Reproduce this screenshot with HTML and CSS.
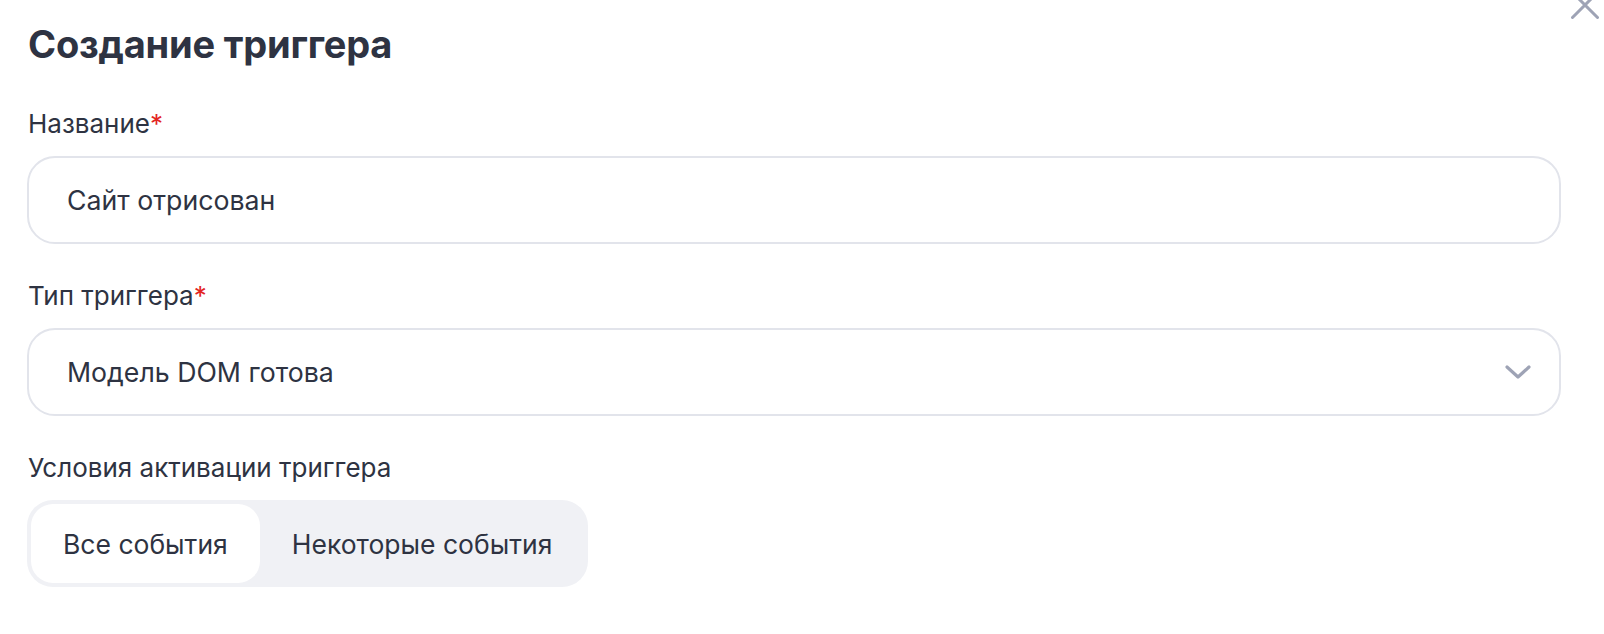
FILE: index.html
```html
<!DOCTYPE html>
<html lang="ru">
<head>
<meta charset="utf-8">
<title>Создание триггера</title>
<link rel="stylesheet" href="styles.css">
</head>
<body>
<div class="dialog">
  <button class="close" aria-label="Закрыть">
    <svg width="28" height="28" viewBox="0 0 28 28"><path d="M1.5 1.5L26.5 26.5M26.5 1.5L1.5 26.5" stroke="#9ea3b5" stroke-width="3" stroke-linecap="round" fill="none"/></svg>
  </button>
  <h1 class="title">Создание триггера</h1>

  <div class="field">
    <label class="label">Название<span class="req">*</span></label>
    <div class="input">Сайт отрисован</div>
  </div>

  <div class="field">
    <label class="label">Тип триггера<span class="req">*</span></label>
    <div class="input select">
      <span>Модель DOM готова</span>
      <svg class="chev" width="28" height="16" viewBox="0 0 28 16"><path d="M3 3L14 13L25 3" stroke="#9ea3b5" stroke-width="3.2" stroke-linecap="round" stroke-linejoin="round" fill="none"/></svg>
    </div>
  </div>

  <div class="field">
    <label class="label">Условия активации триггера</label>
    <div class="segmented">
      <div class="seg active">Все события</div>
      <div class="seg">Некоторые события</div>
    </div>
  </div>
</div>
</body>
</html>
```

FILE: styles.css
```css
* { box-sizing: border-box; }
html, body { margin: 0; padding: 0; background: #fff; }
body {
  font-family: "Inter", "Noto Sans", sans-serif;
  color: #2e3342;
  overflow: hidden;
}
.dialog {
  position: relative;
  padding: 20px 43px 0 27px;
  display: flex;
  flex-direction: column;
}
.close {
  position: absolute;
  top: -9px;
  right: 5px;
  border: 0;
  background: none;
  padding: 0;
  width: 28px;
  height: 28px;
}
.title {
  margin: 0 0 40px 1px;
  font-size: 38px;
  line-height: 48px;
  font-weight: 700;
  letter-spacing: -0.2px;
}
.field {
  display: flex;
  flex-direction: column;
  margin-bottom: 36px;
}
.label {
  font-size: 26px;
  line-height: 32px;
  margin: 0 0 16px 1px;
}
.req { color: #e3261f; }
.input {
  height: 88px;
  border: 2px solid #e2e4eb;
  border-radius: 28px;
  display: flex;
  align-items: center;
  padding: 0 27px 0 38px;
  font-size: 26.7px;
}
.select { justify-content: space-between; }
.segmented {
  align-self: flex-start;
  display: flex;
  background: #f0f1f5;
  border-radius: 26px;
  padding: 4px;
  height: 87px;
}
.seg {
  display: flex;
  align-items: center;
  padding: 0 32px;
  font-size: 26.5px;
  border-radius: 22px;
}
.seg.active { background: #fff; }
```
